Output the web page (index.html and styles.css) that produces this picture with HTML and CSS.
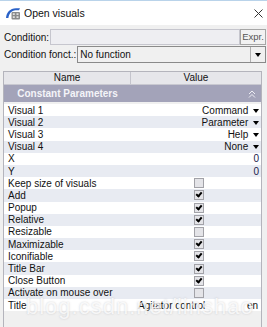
FILE: index.html
```html
<!DOCTYPE html>
<html lang="en">
<head>
  <meta charset="UTF-8">
  <title>Open visuals</title>
  <link rel="stylesheet" href="styles.css">
</head>
<body>

<div class="win">
  <!-- title bar -->
  <div class="titlebar">
    <svg class="appicon" width="16" height="13" viewBox="0 0 16 13">
      <path d="M1 11 C1.5 5 5 1.5 11 1.2 L15 1.2 L14 3.2 L10.5 3.2 C6.5 3.6 4 6.5 3.4 11 Z" fill="#2a62c8"/>
      <rect x="6.5" y="5" width="8.5" height="7.5" rx="1" fill="#8a8a8a"/>
      <rect x="7.8" y="6.3" width="2" height="1.6" fill="#e6e6e6"/>
      <rect x="11.5" y="6.3" width="2" height="1.6" fill="#e6e6e6"/>
      <rect x="7.8" y="9.3" width="2" height="1.6" fill="#e6e6e6"/>
      <rect x="11.5" y="9.3" width="2" height="1.6" fill="#e6e6e6"/>
    </svg>
    <span class="title">Open visuals</span>
    <svg class="close" width="9" height="9" viewBox="0 0 9 9">
      <path d="M0.5 0.5 L8.5 8.5 M8.5 0.5 L0.5 8.5" stroke="#333" stroke-width="1"/>
    </svg>
  </div>

  <div class="content">
    <div class="field">
      <span class="lbl">Condition:</span>
      <div class="input"></div>
      <div class="btn">Expr.</div>
    </div>
    <div class="field second">
      <span class="lbl">Condition fonct.:</span>
      <div class="select">
        <span class="selval">No function</span>
        <span class="drop"><i class="tri"></i></span>
      </div>
    </div>

    <div class="grid">
      <div class="ghead">
        <div class="hname">Name</div>
        <div class="hval">Value</div>
      </div>
      <div class="section">
        <span class="sname">Constant Parameters</span>
        <svg class="chev" width="8" height="8" viewBox="0 0 8 8">
          <path d="M1 4 L4 1 L7 4 M1 7.5 L4 4.5 L7 7.5" stroke="#eeeef4" stroke-width="1" fill="none"/>
        </svg>
      </div>
      <div class="rows">
        <div class="row"><span class="n">Visual 1</span><span class="v">Command <i class="tri"></i></span></div>
        <div class="row"><span class="n">Visual 2</span><span class="v">Parameter <i class="tri"></i></span></div>
        <div class="row"><span class="n">Visual 3</span><span class="v">Help <i class="tri"></i></span></div>
        <div class="row"><span class="n">Visual 4</span><span class="v">None <i class="tri"></i></span></div>
        <div class="row"><span class="n">X</span><span class="v num">0</span></div>
        <div class="row"><span class="n">Y</span><span class="v num">0</span></div>
        <div class="row"><span class="n">Keep size of visuals</span><span class="c"><i class="cb"></i></span></div>
        <div class="row"><span class="n">Add</span><span class="c"><i class="cb on"></i></span></div>
        <div class="row"><span class="n">Popup</span><span class="c"><i class="cb on"></i></span></div>
        <div class="row"><span class="n">Relative</span><span class="c"><i class="cb on"></i></span></div>
        <div class="row"><span class="n">Resizable</span><span class="c"><i class="cb"></i></span></div>
        <div class="row"><span class="n">Maximizable</span><span class="c"><i class="cb on"></i></span></div>
        <div class="row"><span class="n">Iconifiable</span><span class="c"><i class="cb on"></i></span></div>
        <div class="row"><span class="n">Title Bar</span><span class="c"><i class="cb on"></i></span></div>
        <div class="row"><span class="n">Close Button</span><span class="c"><i class="cb on"></i></span></div>
        <div class="row"><span class="n">Activate on mouse over</span><span class="c"><i class="cb"></i></span></div>
        <div class="row"><span class="n">Title</span><span class="t">Agitator control</span><span class="lang">en</span></div>
      </div>
    </div>
  </div>

  <!-- watermark over the screenshot -->
  <div class="watermark">blog.csdn.net/linshao</div>
</div>

</body>
</html>
```

FILE: styles.css
```css
body {
  margin: 0;
  padding: 0;
  font-family: 'Liberation Sans', Arial, sans-serif;
  font-size: 10px;
  color: #000;
  background: #f0f0f0;
}
.win {
  position: relative;
  width: 267px;
  height: 327px;
  overflow: hidden;
  background: #f0f0f0;
}
.titlebar {
  height: 25px;
  background: #fff;
  border-top: 1px solid #b9d3ea;
  box-sizing: border-box;
  display: flex;
  align-items: center;
  padding-left: 5px;
}
.appicon {
  margin-top: 1px;
}
.title {
  margin-left: 3px;
  font-size: 10.5px;
  color: #111;
}
.close {
  margin-left: auto;
  margin-right: 4px;
}

.content {
  padding: 4px 1px 0 3px;
}
.field {
  display: flex;
  align-items: center;
  height: 16px;
}
.field.second {
  margin-top: 1px;
  height: 17px;
}
.lbl {
  padding-left: 1px;
  color: #111;
}
.input {
  flex: 1;
  height: 14px;
  margin-left: 1px;
  background: #eeeef2;
  border: 1px solid #c6c6ce;
}
.btn {
  width: 24px;
  height: 14px;
  border: 1px solid #a6a6a6;
  background: #f2f2f2;
  color: #555;
  font-size: 9.5px;
  line-height: 14px;
  text-align: center;
}
.select {
  flex: 1;
  height: 15px;
  margin-left: 1px;
  display: flex;
  border: 1px solid #8a8a8a;
  background: #f0f0f0;
}
.selval {
  flex: 1;
  padding-left: 2px;
  line-height: 15px;
  color: #111;
}
.drop {
  width: 14px;
  border-left: 1px solid #b0b0b0;
  display: flex;
  align-items: center;
  justify-content: center;
}
.tri {
  display: inline-block;
  width: 0;
  height: 0;
  border-left: 3.5px solid transparent;
  border-right: 3.5px solid transparent;
  border-top: 4px solid #000;
}

.grid {
  margin: 8px 4px 0 0;
  height: 256px;
  border: 1px solid #b4b4bc;
  background: #f0f0f0;
}
.ghead {
  display: flex;
  height: 12px;
  line-height: 12px;
  background: #e6e6ea;
  border-bottom: 1px solid #c8c8d0;
  text-align: center;
  color: #111;
}
.hname {
  width: 126px;
  border-right: 1px solid #c4c4cc;
}
.hval {
  flex: 1;
}
.section {
  display: flex;
  align-items: center;
  height: 17px;
  background: #a3a3b9;
}
.sname {
  width: 127px;
  text-align: center;
  font-weight: bold;
  color: #f4f4f8;
}
.chev {
  margin-left: auto;
  margin-right: 5px;
}
.rows {
  padding-top: 2px;
}
.row {
  display: flex;
  align-items: center;
  height: 12.2px;
  background: #fff;
}
.row:nth-child(even) {
  background: #e8ebf2;
}
.n {
  width: 123px;
  padding-left: 4px;
  color: #111;
  white-space: nowrap;
}
.v {
  flex: 1;
  text-align: right;
  padding-right: 2px;
  color: #111;
}
.v .tri {
  margin-left: 2px;
  vertical-align: 1px;
}
.num {
  color: #1c1c4c;
}
.c {
  flex: 1;
  padding-left: 63px;
  display: flex;
}
.cb {
  display: block;
  width: 8px;
  height: 8px;
  border: 1px solid #a2a2a8;
  background: #e4e4e8;
  position: relative;
}
.cb.on::after {
  content: "";
  position: absolute;
  left: 2px;
  top: 0px;
  width: 2px;
  height: 4px;
  border-right: 2px solid #000;
  border-bottom: 2px solid #000;
  transform: rotate(40deg);
}
.t {
  flex: 1;
  padding-left: 7px;
  color: #111;
}
.lang {
  padding-right: 3px;
  color: #111;
}

.watermark {
  position: absolute;
  left: 26px;
  top: 294px;
  font-size: 22px;
  letter-spacing: 1px;
  color: rgba(255, 255, 255, 0.8);
  text-shadow: 0 0 2px rgba(120, 120, 130, 0.35);
  white-space: nowrap;
}
```
